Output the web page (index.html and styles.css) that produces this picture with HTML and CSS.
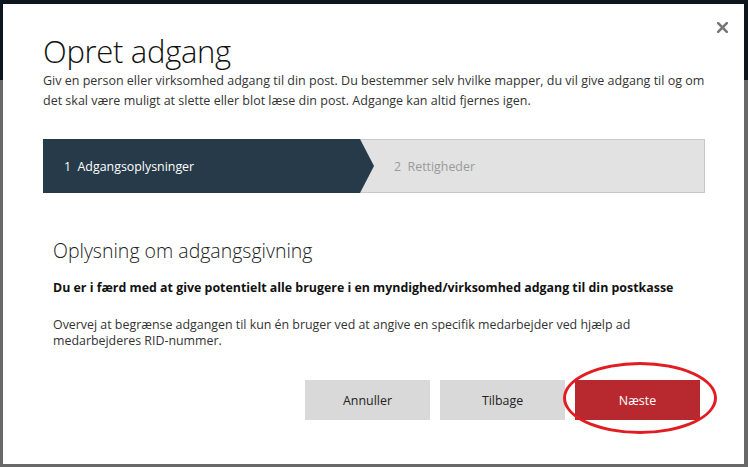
FILE: index.html
```html
<!DOCTYPE html>
<html lang="da">
<head>
<meta charset="utf-8">
<title>Opret adgang</title>
<link rel="stylesheet" href="styles.css">
</head>
<body>
<div class="page">
  <header class="page-header"></header>
  <main class="page-body"></main>
</div>

<div class="modal">
  <button class="close" aria-label="Luk">
    <svg width="11" height="11" viewBox="0 0 11 11"><path d="M1.2 1.2 L9.8 9.8 M9.8 1.2 L1.2 9.8" stroke="#777" stroke-width="2.6" stroke-linecap="square"/></svg>
  </button>
  <h1 class="title">Opret adgang</h1>
  <p class="desc">Giv en person eller virksomhed adgang til din post. Du bestemmer selv hvilke mapper, du vil give adgang til og om det skal være muligt at slette eller blot læse din post. Adgange kan altid fjernes igen.</p>

  <div class="stepper">
    <div class="step step-active">1&nbsp;&nbsp;Adgangsoplysninger</div>
    <div class="step step-next">2&nbsp;&nbsp;Rettigheder</div>
  </div>

  <section class="info">
    <h2 class="info-title">Oplysning om adgangsgivning</h2>
    <p class="info-warning">Du er i færd med at give potentielt alle brugere i en myndighed/virksomhed adgang til din postkasse</p>
    <p class="info-text">Overvej at begrænse adgangen til kun én bruger ved at angive en specifik medarbejder ved hjælp ad medarbejderes RID-nummer.</p>
  </section>

  <div class="actions">
    <button class="btn">Annuller</button>
    <button class="btn">Tilbage</button>
    <button class="btn btn-primary">Næste</button>
  </div>
</div>

<div class="highlight"></div>
</body>
</html>
```
FILE: styles.css
```css
html, body {
  margin: 0;
  padding: 0;
  height: 100%;
}
body {
  font-family: "Open Sans", "Noto Sans", sans-serif;
  background: #686868;
  overflow: hidden;
}
.page {
  display: flex;
  flex-direction: column;
  height: 100%;
}
.page-header {
  height: 80px;
  background: #0e161d;
}
.page-body {
  flex: 1;
  background: #686868;
}

.modal {
  position: absolute;
  left: 3px;
  top: 4px;
  width: 741px;
  height: 460px;
  box-sizing: border-box;
  background: #fff;
  padding: 27px 39px 0 40px;
  color: #222;
}
.close {
  position: absolute;
  right: 16px;
  top: 18px;
  width: 11px;
  height: 11px;
  padding: 0;
  border: 0;
  background: none;
  display: flex;
}
.title {
  margin: 0;
  font-weight: 300;
  font-size: 31px;
  line-height: 40px;
  color: #111;
  letter-spacing: -0.3px;
}
.desc {
  margin: 0;
  font-size: 12.5px;
  line-height: 20px;
  color: #333;
}

.stepper {
  margin-top: 28px;
  height: 54px;
  box-sizing: border-box;
  border: 1px solid #c9c9c9;
  background: #e2e2e2;
  display: flex;
  align-items: stretch;
}
.step {
  display: flex;
  align-items: center;
  font-size: 12.4px;
}
.step-active {
  margin: -1px 0 -1px -1px;
  width: 331px;
  padding-left: 21px;
  box-sizing: border-box;
  background: #263a49;
  color: #fff;
  clip-path: polygon(0 0, 317px 0, 100% 50%, 317px 100%, 0 100%);
}
.step-next {
  padding-left: 20px;
  color: #9a9a9a;
}

.info {
  padding: 0 10px;
  margin-top: 44px;
}
.info-title {
  margin: 0;
  font-weight: 300;
  font-size: 19.5px;
  line-height: 28px;
  color: #222;
}
.info-warning {
  margin: 14px 0 0;
  font-weight: 700;
  font-size: 12.4px;
  line-height: 18px;
  color: #111;
}
.info-text {
  margin: 20px 0 0;
  font-size: 12.4px;
  line-height: 16px;
  color: #333;
}

.actions {
  position: absolute;
  right: 44px;
  top: 376px;
  display: flex;
  gap: 10px;
}
.btn {
  width: 125px;
  height: 40px;
  border: 0;
  padding: 0;
  background: #d9d9d9;
  color: #222;
  font-family: inherit;
  font-size: 12.4px;
}
.btn-primary {
  background: #b8292f;
  color: #fff;
}

.highlight {
  position: absolute;
  left: 563px;
  top: 362px;
  width: 154px;
  height: 72px;
  box-sizing: border-box;
  border: 3px solid #e11d22;
  border-radius: 50%;
}
```
